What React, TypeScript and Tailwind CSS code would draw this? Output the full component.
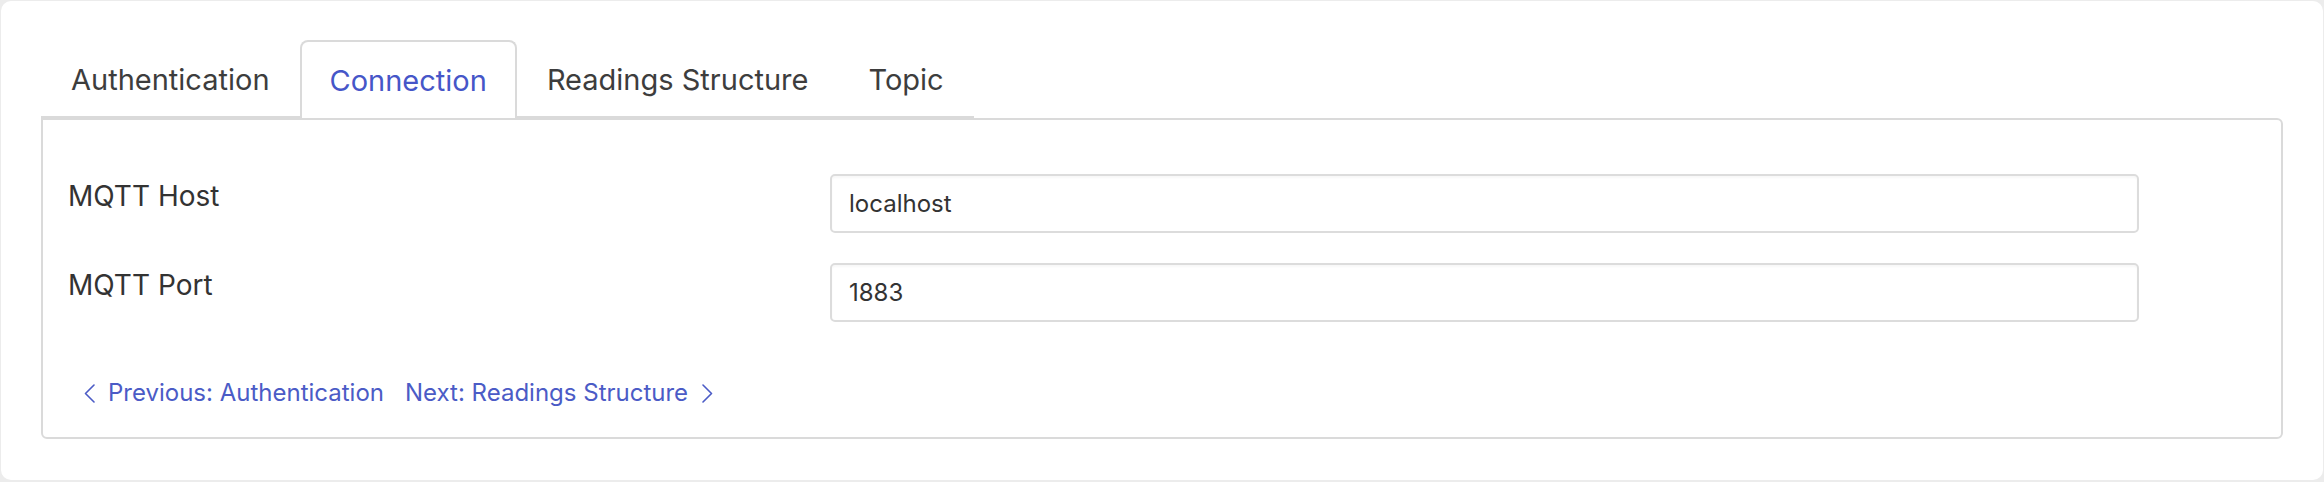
const tabs = ["Authentication", "Connection", "Readings Structure", "Topic"]

function Field({ label, value }: { label: string; value: string }) {
  return (
    <div className="grid grid-cols-[762px_1309px] items-start">
      <label className="pt-[4px] text-[28px] leading-[36px] text-[#333333]">{label}</label>
      <div className="h-[59px] rounded-[5px] border-2 border-[#dcdcdc] bg-white flex items-center px-[17px] shadow-[inset_0_2px_2px_rgba(0,0,0,0.03)]">
        <span className="text-[24px] text-[#333333]">{value}</span>
      </div>
    </div>
  )
}

function Chevron({ dir }: { dir: "left" | "right" }) {
  return (
    <svg width="11" height="19" viewBox="0 0 11 19" fill="none" stroke="currentColor" strokeWidth="1.6" strokeLinecap="round" strokeLinejoin="round">
      {dir === "left" ? <polyline points="10,1 1.5,9.5 10,18" /> : <polyline points="1,1 9.5,9.5 1,18" />}
    </svg>
  )
}

function App() {
  const active = "Connection"

  return (
    <div
      className="w-[2324px] h-[482px] bg-[#ececec] pt-[1px] pl-[1px]"
      style={{ fontFamily: "Inter, 'Noto Sans', sans-serif" }}
    >
      <div className="w-[2322px] h-[479px] rounded-[10px] bg-white pt-[42px] px-[40px]">
        <div className="flex items-end w-[933px] border-b-2 border-[#dadada] h-[75px]">
          {tabs.map((t) => (
            <div
              key={t}
              className={
                t === active
                  ? "h-[78px] -mb-[2px] px-[28px] pt-[2px] flex items-center rounded-t-[8px] border-2 border-b-0 border-[#dadada] bg-white text-[29px] text-[#4656c8]"
                  : "h-[75px] px-[30px] pt-[3px] flex items-center text-[29px] text-[#3d3d3d]"
              }
            >
              {t}
            </div>
          ))}
        </div>
        <div className="h-[321px] rounded-b-[6px] rounded-tr-[6px] border-2 border-[#dadada] pl-[25px] pt-[54px]">
          <div className="flex flex-col gap-[30px]">
            <Field label="MQTT Host" value="localhost" />
            <Field label="MQTT Port" value="1883" />
          </div>
          <div className="flex items-center gap-[21px] mt-[53px] pl-[16px] text-[24px] text-[#4b5bc6]">
            <button className="flex items-center gap-[13px]">
              <Chevron dir="left" />
              <span>Previous: Authentication</span>
            </button>
            <button className="flex items-center gap-[14px]">
              <span>Next: Readings Structure</span>
              <Chevron dir="right" />
            </button>
          </div>
        </div>
      </div>
    </div>
  )
}

export default App
